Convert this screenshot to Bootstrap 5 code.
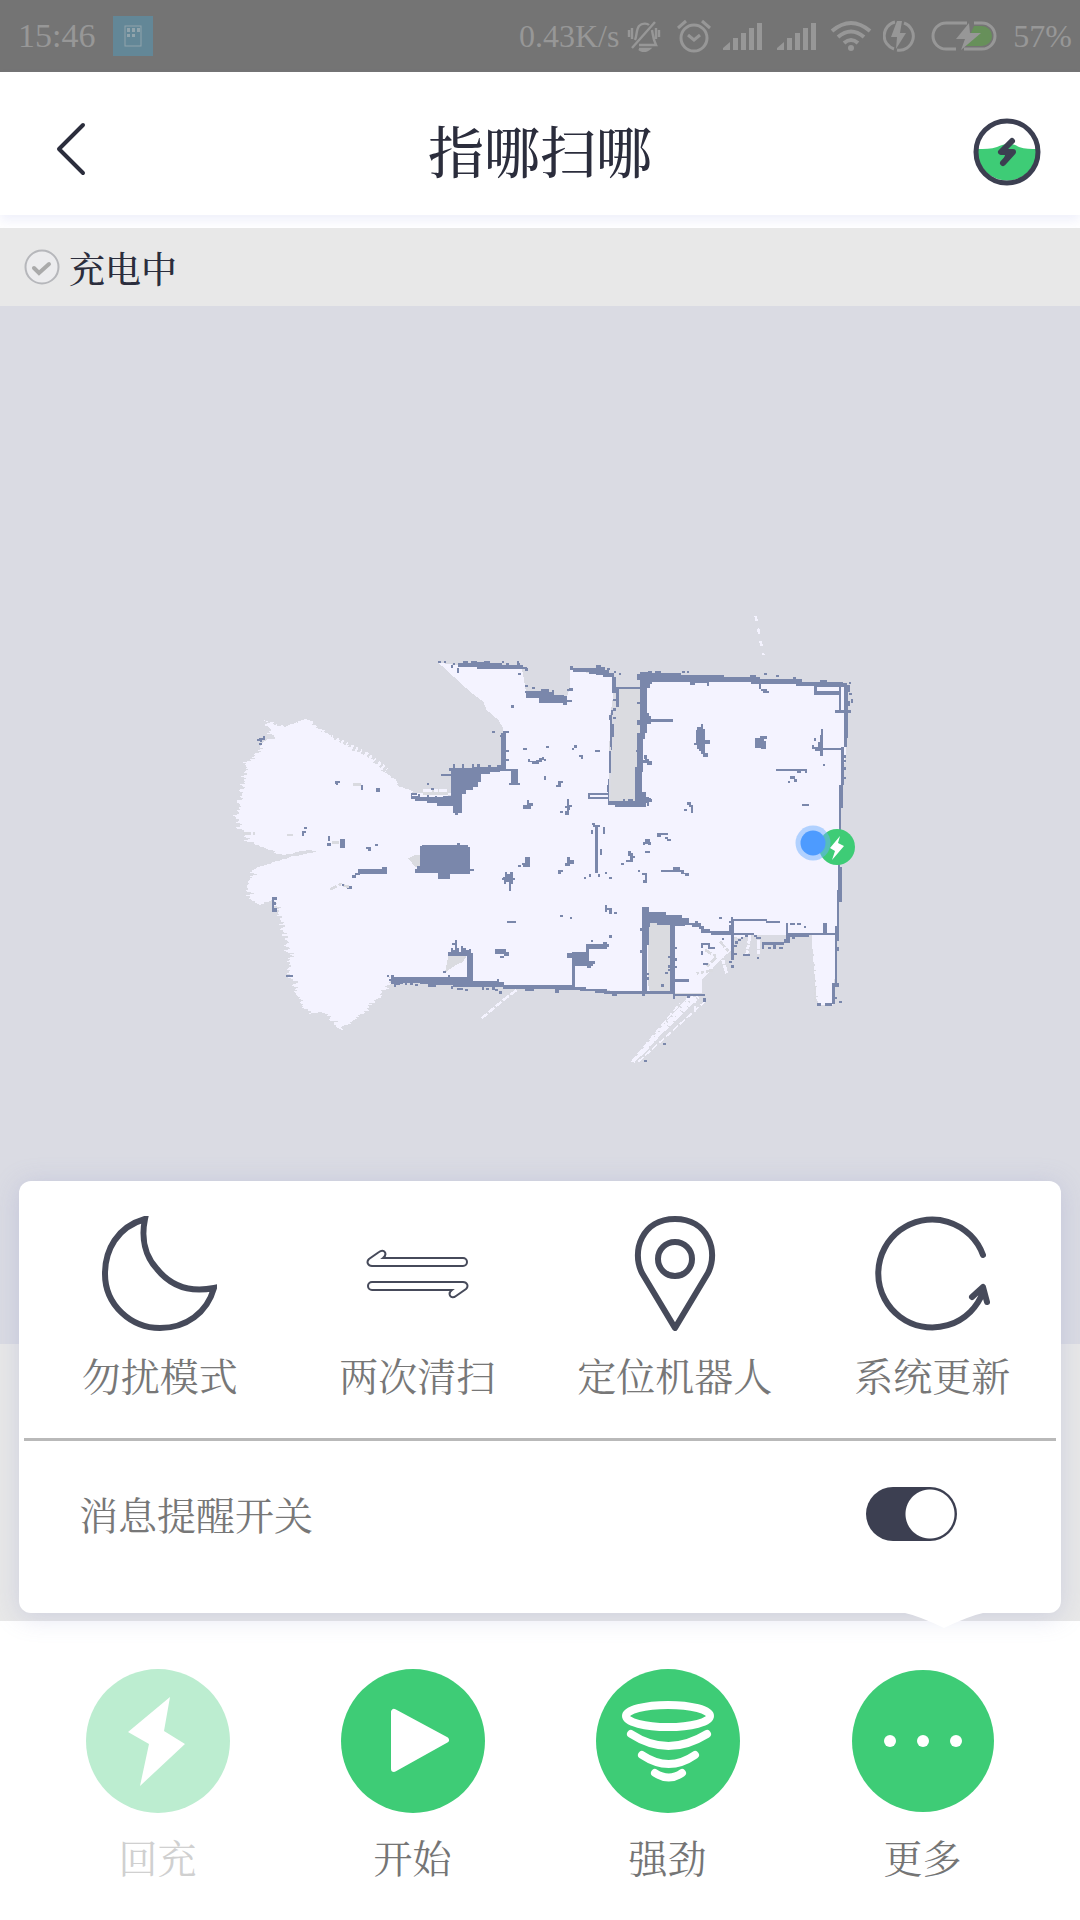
<!DOCTYPE html>
<html lang="zh-CN">
<head>
<meta charset="utf-8">
<meta name="viewport" content="width=device-width, initial-scale=1">
<title>指哪扫哪</title>
<link href="https://cdn.jsdelivr.net/npm/bootstrap@5.3.0/dist/css/bootstrap.min.css" rel="stylesheet">
<style>
  :root { --ink:#2b2d3c; }
  body { font-family:"Liberation Serif","Noto Serif CJK SC","Noto Sans CJK SC",serif; background:#fff; color:var(--ink); }
  svg { display:block; flex:none; }
  .sysbar { height:72px; background:#747474; color:#979797; font-size:32px; line-height:72px; padding:0 8px 0 18px; }
  .sysbar .clock { font-size:34px; }
  .sysbar .app { margin-left:18px; }
  .topbar { padding:38px 0 21px; box-shadow:0 6px 10px rgba(110,120,220,.1); margin-bottom:13px; }
  .topbar h1 { font-size:56px; line-height:80px; padding-top:4px; font-weight:500; margin:0; }
  .side { width:140px; }
  .side-start { padding-left:56px; }
  .side-end { padding-right:39px; }
  .bare { border:0; background:none; padding:0; color:inherit; }
  .state { background:#e8e8e8; padding-left:24px; gap:9px; font-size:36px; font-weight:500; }
  .state span { line-height:70px; padding-top:8px; }
  .stage { background:#e8e8e8; }
  .stage .plan { width:100%; height:auto; background:#dadbe3; }
  .sheet { left:19px; right:19px; bottom:8px; background:#fff; border-radius:12px; box-shadow:0 3px 26px rgba(140,145,200,.3); color:#777; font-size:39px; }
  .tools { padding:35px 0 32px 12px; }
  .tools button, .dock button { line-height:56px; }
  .tools button, .dock button { display:flex; flex-direction:column; align-items:center; gap:19px; }
  .rule { height:3px; background:#b9b9b9; margin:0 5px; }
  .notice { padding:42px 104px 68px 60px; }
  .notice label { line-height:56px; padding-top:6px; }
  .form-switch .form-check-input.toggle { width:91px; height:54px; margin:0; border:0; float:none; background-color:#b9b9b9; background-size:50px 50px; background-position:2px center; background-image:radial-gradient(circle closest-side,#fff 96%,transparent); }
  .form-switch .form-check-input.toggle:checked { background-color:#3c3f51; background-position:39px center; }
  .tip { right:78px; top:100%; margin-top:-1px; }
  .dock { padding:48px 30px 32px; color:#757575; font-size:39px; }
  .dock button:disabled { color:#d0d0d0; }
</style>
</head>
<body>
<div class="min-vh-100 d-flex flex-column">

  <div class="sysbar d-flex align-items-center">
    <span class="clock">15:46</span>
    <svg class="app" width="40" height="40" viewBox="0 0 40 40"><rect width="40" height="40" fill="#638797"/><rect x="12" y="10" width="16" height="20" fill="none" stroke="#91a4ac" stroke-width="1"/><path d="M14 12h3v4h-3zM19 12h3v4h-3zM24 12h3v4h-3zM14 18h3v3h-3zM19 18h3v3h-3z" fill="#91a4ac"/></svg>
    <span class="ms-auto me-2">0.43K/s</span>
    <svg width="34" height="32" viewBox="0 0 34 32" fill="none" stroke="#979797" stroke-width="2.400"><path d="M8 20c2-4 1-10 4-14 3-3 8-3 10-1M25 10c1 5 1 9 4 15H12M5 28 28 2M2 10v7M5 8v11M32 10v7M29 8v11"/><path d="M12 29h10q-5 4-10 0" fill="#979797"/></svg>
    <svg class="ms-3" width="34" height="34" viewBox="0 0 34 34" fill="none" stroke="#979797" stroke-width="3"><circle cx="17" cy="19" r="13"/><path d="m11 16 6 5 6-5M1 9l8-7M33 9l-8-7"/></svg>
    <svg class="ms-2" width="46" height="28" viewBox="0 0 46 28" fill="#979797"><path d="M4 28v-2l7-6v8zM14 16h5v12h-5zM22 11h5v17h-5zM30 6h5v22h-5zM38 1h5v27h-5z"/></svg>
    <svg class="ms-2" width="46" height="28" viewBox="0 0 46 28" fill="#979797"><path d="M4 28v-2l7-6v8zM14 16h5v12h-5zM22 11h5v17h-5zM30 6h5v22h-5zM38 1h5v27h-5z"/></svg>
    <svg class="ms-2" width="48" height="32" viewBox="0 0 48 32" fill="none" stroke="#979797" stroke-width="4"><path d="M5 11q19-16 38 0M11 17q13-11 26 0M17 23q7-6 14 0"/><circle cx="24" cy="28" r="3" fill="#979797" stroke="none"/></svg>
    <svg class="ms-2" width="32" height="34" viewBox="0 0 32 34"><path d="M12 3A14 14 0 0 0 11 30M21 4a14 14 0 0 1-7 27" fill="none" stroke="#979797" stroke-width="3"/><path d="M14 2 8 18h6l-1 12 10-16h-6l2-12z" fill="#979797"/></svg>
    <svg class="ms-3" width="66" height="30" viewBox="0 0 66 30"><path d="M43 5h8a10 10 0 0 1 0 20H34z" fill="#67905a"/><path d="M36 2H15a13 13 0 0 0 0 26h10M43 2h8a13 13 0 0 1 0 26H33" fill="none" stroke="#979797" stroke-width="3"/><path d="M38 2 25 18h9l-4 11 20-17H39z" fill="#979797"/></svg>
    <span class="ms-3">57%</span>
  </div>

  <header class="topbar d-flex align-items-center">
    <div class="side side-start"><button type="button" class="bare" aria-label="返回"><svg width="30" height="54" viewBox="0 0 30 54"><path d="M27 3 3 27l24 24" fill="none" stroke="#2b2d3c" stroke-width="4" stroke-linecap="round" stroke-linejoin="round"/></svg></button></div>
    <h1 class="flex-grow-1 text-center">指哪扫哪</h1>
    <div class="side side-end d-flex justify-content-end"><button type="button" class="bare" aria-label="电量"><svg width="68" height="68" viewBox="0 0 68 68"><path d="M4 31c8 0 14 0 20-2 8-4 16-4 22 0 6 2 12 2 18 2a30 30 0 1 1-60 3z" fill="#3ecc76"/><circle cx="34" cy="34" r="31" fill="none" stroke="#3c3f51" stroke-width="5"/><path d="M39 23 28 34h12L30 45" fill="none" stroke="#3c3f51" stroke-width="6" stroke-linecap="round" stroke-linejoin="round"/><path d="m38 23-9 11h10l-9 11 2-8-5-3z" fill="#3c3f51"/></svg></button></div>
  </header>

  <div class="state d-flex align-items-center">
    <svg width="36" height="36" viewBox="0 0 36 36" fill="none"><circle cx="18" cy="18" r="16.500" fill="#ececee" stroke="#b6b7bb" stroke-width="2"/><path d="m10 19 5 5 10-9" stroke="#aaa" stroke-width="4" stroke-linecap="round"/></svg>
    <span>充电中</span>
  </div>

  <main class="stage position-relative flex-grow-1">
    <svg class="plan" viewBox="0 306 1080 1038" role="img" aria-label="清扫地图" shape-rendering="crispEdges">
      <defs>
        <!-- ragged lidar edge: shifts pixels sideways only -->
        <filter id="ragged" x="-5%" y="-5%" width="110%" height="110%" color-interpolation-filters="sRGB">
          <feTurbulence type="fractalNoise" baseFrequency="0.012 0.14" numOctaves="2" seed="4"/>
          <feColorMatrix values="1 0 0 0 0  0 0 0 0 0.5  0 0 0 0 0.5  0 0 0 0 1" result="n"/>
          <feDisplacementMap in="SourceGraphic" in2="n" scale="50" xChannelSelector="R" yChannelSelector="G"/>
        </filter>
      </defs>
      <!-- cleaned floor -->
      <g transform="translate(220 640) scale(.33333)">
        <path filter="url(#ragged)" fill="#f4f3ff" d="M700 1000H515L500 1045 485 1052 470 1085 435 1110 420 1128 400 1140 370 1172 345 1150 310 1115 275 1122 250 1100 230 1050 212 1000 205 935 190 880 180 820 160 780 115 795 92 780 80 740 100 690 180 660 290 635 265 630 185 645 150 630 80 600 65 570 50 545 65 460 80 370 110 340 145 300 165 295 135 240 185 262 260 236 290 265 330 285 360 310 400 330 430 345 470 375 500 400 530 425 575 458H700Z"/>
        <path fill="#f4f3ff" d="M655 68 715 76 905 80 918 155 1035 185 1050 145V90L1180 110V165L1170 230 1165 490H1260V105L1870 130 1882 300 1865 440 1855 780 1850 880 1840 1094H1795L1785 980 1775 885H1600L1560 895 1540 890 1535 930 1500 960 1465 1000 1445 1020V1060H1360L960 1042 510 1020 480 600 545 440 600 470 690 480 700 395 850 385 850 265 835 240 800 210 790 185 750 155Z"/>
        <g fill="none" stroke="#f4f3ff">
          <path stroke-width="16" stroke-dasharray="7 9 4 12 9 7" d="M150 255 200 268 262 242 300 278 360 305 440 345 500 390"/>
          <path stroke-width="7" stroke-dasharray="22 6" d="M785 1135 850 1080 890 1050"/>
          <path stroke-width="9" stroke-dasharray="35 4 18 3" d="M1240 1265 1410 1070M1262 1245 1420 1070M1275 1225 1435 1070"/>
          <path stroke-width="5" stroke-dasharray="20 8" d="M1255 1265 1460 1080M1235 1265 1380 1090M1425 1070v45"/>
          <path stroke-width="8" stroke-dasharray="16 22" d="M1607-72 1630 45"/>
        </g>
        <!-- unreachable pockets -->
        <path fill="#dadbe0" d="M1195 145h70v345h-95l10-170zM1285 850h70v205h-65l-5-20zM600 448h85v16h-75zM685 948h55l-12 18-25 12-28 20zM565 655l20-10h15v40l-15-5z"/>
        <path fill="none" stroke="#d9dae0" stroke-width="8" stroke-dasharray="22 6 10 5" d="M70 580H105M200 585H220M330 748 360 733 390 742M335 608H362M400 434H425M1455 930 1490 950 1460 980M1500 905 1540 950M1480 990 1430 1000M1785 985v100"/>
        <path fill="none" stroke="#f4f3ff" stroke-width="9" stroke-dasharray="26 5 12 4" d="M1500 930 1520 1000M1590 885 1580 945M1615 900v45M1780 900 1795 1090M610 452h70"/>
      </g>
      <!-- west side -->
      <g transform="translate(220 640) scale(.33333)" fill="#7a87ab">
        <path d="M110 298h8v-4h12v-6h5v12h-10v6h-4v-4h-11zM118 310h7v5h-7zM345 422h14v6h-5v8h-7zM422 435h8v14h-8zM467 443h13v12h-13zM252 562h10v6h-10zM245 572h12v8h-5v8h-6v-8zM360 598h7v-2h8v27h-15zM324 588h7v15h-7zM322 610h10v8h-10zM438 620h14v12h-8v-6h-6zM466 612h7v6h-7z"/>
        <path d="M415 688h72v-6h14v20h-82v4h-12v8h-10v-8h8v-8h10zM365 732h8v6h-8zM380 744h8v-7h8v10h-16zM155 772h15v8h-7v7h6v8h-6v8h7v12h-15zM198 1006h22v5h-22zM572 458h20v6h-15v8h7v5h-12z"/>
        <path d="M501 1005h7v6h-7zM513 1005h8v7h20v22h-12v6h-8v-8h-8v-8h-5v-8h5z"/>
      </g>
      <!-- north centre -->
      <g transform="translate(400 650) scale(.33333)" fill="#7a87ab">
        <path d="M115 34h7v6h-7zM131 34h7v6h-7zM152 46h6v-6h6v6h-6v8h-6zM170 54h8v14h-8zM174 40h16v-6h14v6h8v-6h20v3h20v-3h18v6h35v6h14v-6h8v6h25v-8h8v6h10v8h10v6H230v-6h-56zM305 34h7v6h-7zM350 34h7v6h-7zM355 68h8v7h-8zM376 54h8v8h-8zM376 104h7v7h-7zM397 110h7v6h-7zM333 166h8v8h-8z"/>
        <path d="M376 124h48v-7h24v8h8v-4h6v14h30v4h8v12h16v6h-14v8h-12v-6h-72v-14h-40zM502 118h6v-5h10v10h-16zM510 48h8v6h70v-8h16v6h10v8h14v8h14v12h6v50h-12V82h-28v-6h-20v-4h-20v-6h-50v-6h-8zM622 54h7v6h-7zM642 62h7v6h-7zM656 68h7v6h-7zM642 110h80v8h-65v52h-8v-50h-7zM640 148h8v6h-8zM640 174h8v8h-8v12h-8v-14h8zM640 202h8v6h-8z"/>
        <path d="M628 196h8v26h6v40h-6v38h-4v70h-4v84h96v18h-80v-6h-20v-40h-4v-22h4v-16h4v-84h4zM565 428h60v6h-54v8h54v5h-60zM670 448h6v8h-6zM684 448h14v8h-14zM710 350h16v75h12v18h14v10h-14v18h-32zM720 68h30v45h-10v90h8v8h-8v28h-6v28h-6v100h-10V250h6V90h-4z"/>
        <path d="M304 256H299V262H304V344H290V350H272V344H264V350H240V342H232V350H222V342H216V354H192V342H186V354H164V342H158V354H146V362H152V372H122V378H152V438H130V442H112V438H104V442H88V434H82V440H60V432H54V438H32V446H46V454H80V460H110V467H158V488H166V494H174V488H186V432H198V420H220V412H234V396H242V372H270V366H300V362H334V398H328V404H360V398H354V356H318V334H326V328H318V306H326V300H318V250H326V244H308V250H304ZM276 244h8v6h-8zM80 399h8v6h-8zM94 414h8v6h-8z"/>
        <path d="M368 293h14v6h-14zM438 287h8v6h-8zM522 286h8v7h-8v7h-7v-7h7zM536 314h14v14h-6v-8h-8zM586 301h14v6h-14zM383 328h8v6h18v-4h8v-6h10v-4h6v6h6v8h-8v-5h-6v6h-8v6h-22v-6h-12zM431 379h8v12h-8zM474 392h14v8h-6v12h-14v-7h6zM370 464h10v-14h8v10h10v8h-6v8h-22zM502 448h6v16h8v6h-6v10h-2v16h-12v-12h4v-10h-6v-6h8zM480 484h8v6h-8z"/>
      </g>
      <!-- south centre -->
      <g transform="translate(400 820) scale(.33333)" fill="#7a87ab">
        <path d="M60 78h6v-4h104v-4h10v4h24v8h6v66h12v6h-12v8h-60v16h-36v-20h-70v-12h8v-8h8zM375 112h14v28h-20v-6h-4v-6h10zM355 134h7v7h-7zM310 170h4v-14h8v6h8v-6h10v18h5v6h-5v12h-6v20h-8v-26h-8v6h-6v-12h-5v-6h3zM500 112h10v8h12v12h-12v6h-14v-8h4zM474 150h14v6h-6v6h-8zM481 284h8v7h-8zM509 290h8v7h-8zM320 303h28v7h-28z"/>
        <path d="M586 20h8v140h-8zM578 8h8v7h14v7h-20v-6h-6zM572 30h8v12h-8zM608 22h7v20h-7zM600 86h7v20h-7zM551 170h7v7h-7zM566 163h7v7h-7zM593 163h8v7h-8zM614 156h7v7h-7zM628 170h7v7h-7zM664 128h7v7h-7zM684 92h8v7h6v8h8v8h-8v12h-20v-6h12v-14h-6zM713 149h7v7h-7zM726 158h14v30h-12v-7h6v-16h-8zM735 66h8v-8h6v14h-12zM735 94h14v6h-14zM614 255h8v8h14v18h-8v-12h-8v6h-6zM642 275h8v7h-8zM628 346h7v7h-7zM572 360h7v7h-7z"/>
        <path d="M144 396H152V384H158V390H164V374H156V368H164V360H170V384H176V396H182V378H188V384H198V390H206V388H214V400H220V484H290V478H298V486H312V494H515V437H517V414H502V400H515V395H558V372H608V366H620V372H628V380H622V386H566V424H586V432H578V438H572V444H560V437H524V500H558V506H620V514H750V521H650V528H636V521H612V518H586V512H540V510H476V518H466V508H402V514H376V508H310V502H284V510H276V502H252V510H246V500H160V494H108V500H84V492H60V488H40V494H30V488H10V492H0V472H200V408H144Z"/>
        <path d="M285 388h34v8h8v12h-14v6h-12v-6h10v-6h-26zM130 452h7v8h-7zM144 466h7v6h-7zM14 488h8v6h-8zM45 492h8v6h-8zM152 498h8v8h-8zM172 504h18v6h-18zM196 508h8v6h-8zM258 503h8v8h-8zM285 506h8v8h-8zM298 514h8v7h-8zM720 324h7v7h-7zM720 390h7v10h-7zM740 460h8v6h-8z"/>
      </g>
      <!-- south east -->
      <g transform="translate(630 890) scale(.33333)" fill="#7a87ab">
        <path d="M37 50H57V66H109V76H155V84H178V100H196V94H204V100H212V108H222V116H240V122H298V104H302V98H298V92H302V80H308V86H412V93H450V100H408V93H312V128H372V134H312V210H304V134H242V128H214V118H206V110H186V106H164V108H134V312H226V318H136V326H128V311H45V318H37V311H0V304H37ZM60 100V112H56V165H50V304H121V106H80V100Z" fill-rule="evenodd"/>
        <path d="M134 170h8v7h-8zM134 205h8v7h-8zM134 228h8v7h-8zM134 268h42v7h-42zM114 198h10v7h-10zM114 226h10v7h-10zM106 246h8v-8h8v6h-8v8h-8zM93 283h8v7h-8zM50 249h8v7h-8zM50 262h8v7h-8zM30 115h7v7h-7zM30 180h8v10h-8zM214 158h26v14h16v6h-22v-14h-14v10h-6zM212 184h6v12h-6zM218 220h16v6h-16zM220 325h8v12h-8zM170 317h10v7h-10zM268 80h7v7h-7zM276 143h7v7h-7zM340 192h20v6h-20zM380 200h8v6h-8zM304 226h8v7h-8zM298 212h8v6h-8zM312 166h8v6h-8zM312 190h8v6h-8zM316 154h8v7h-8zM324 148h8v-7h7v7h-7v6h-8zM346 134h8v7h-8zM372 134h8v6h14v8h-16v-8h-6zM100 460h8v6h-8zM43 510h8v6h-8z"/>
        <path d="M396 156H462V148H467V100H473V128H580V100H592V128H614V108H622V0H634V36H628V154H622V172H628V184H622V280H628V290H616V320H622V328H614V342H606V278H614V134H538V140H494V148H486V142H480V160H462V164H402V178H396ZM414 172h10v6h-10zM430 162h8v14h-8zM448 172h10v6h-10zM480 100h14v6h-14zM502 100h12v6h-12zM522 107h7v7h-7zM560 340h12v7h-12zM584 340h22v7h-22zM627 332h8v7h-8z"/>
      </g>
      <!-- north east -->
      <g transform="translate(630 660) scale(.33333)" fill="#7a87ab">
        <path d="M22 42H30V36H54V32H66V38H74V32H92V38H154V44H282V52H360V46H378V52H390V58H488V52H498V58H516V66H570V60H590V66H638V70H652V76H660V96H654V122H660V138H654V234H650V262H642V374H640V444H634V510H628V374H634V262H642V158H614V151H626V106H552V78H498V72H362V66H238V78H230V68H196V74H180V66H65V72H50V84H44V160H56V168H64V178H128V185H64V192H50V202H44V208H50V218H42V238H36V410H58V418H66V426H58V438H50V430H44V440H16V320H22V220H30V196H22V188H30V60H22ZM562 80V94H626V80ZM633 80V151H642V80Z" fill-rule="evenodd"/>
        <path d="M157 34h7v6h-7zM170 32h7v6h-7zM402 40h8v6h-8zM438 46h8v6h-8zM656 66h7v6h-7zM658 98h8v8h-8zM662 118h6v12h-6zM655 150h8v8h-8zM388 70h6v16h16v8h6v6h-16v-8h-8v-4h-6zM200 200h12v-7h6v14h8v34h14v12h-14v25h8v12h-14v-8h-6v-8h-6v-8h-8v-12h-8v-6h6zM376 234h14v-6h20v8h-8v8h6v24h-14v-4h-18zM572 208h7v56h58v6h-58v18h-8v-14h-16v-6h-10v-12h6v6h12v-16h8zM551 234h6v8h-6zM578 312h8v7h-8zM438 326h92v12h-6v-4h-12v4h-10v-6h-64zM480 348h14v10h8v8h-10v-8h-12zM473 362h8v6h-8zM170 426h14v8h6v24h-8v-16h-6v-6h-6zM163 446h7v7h-7zM515 433h22v6h-22zM80 518h34v6H94v6H80zM42 284h8v12h8v6h8v14H50v-8H36v-8h8z"/>
        <path d="M640 285h8v8h-8zM642 300h6v6h-6zM640 322h8v8h-8zM640 350h8v8h-8zM18 270h8v6h-8zM22 125h8v8h-8zM22 180h8v8h-8z"/>
      </g>
      <g transform="translate(540 600) scale(.33333)" fill="#7a87ab">
        <path d="M895 785h6v105h-6zM897 800h8v106h-8zM363 809h36v-7h20v8h12v8h16v10h-12v-6h-12v-6h-60zM308 726h8v-8h8v8h8v10h-8v-8h-8v6h-8zM314 753h14v6h-14zM376 710h8v8h8v6h-10v-8h-6z"/>
      </g>
      <g shape-rendering="auto">
        <circle cx="837" cy="847" r="18" fill="#3ecc76"/>
        <path d="M840 836 830 848l5 3-3 9 12-14-6-3z" fill="#fff"/>
        <circle cx="813" cy="843" r="17.500" fill="#6eb0ff" fill-opacity=".5"/>
        <circle cx="813" cy="843" r="12.500" fill="#4d9bff"/>
      </g>
    </svg>

    <section class="sheet position-absolute" aria-label="更多">
      <div class="tools row row-cols-4 g-0">
        <button type="button" class="bare col"><svg width="115" height="115" viewBox="0 0 115 115" fill="none" stroke="#464a5a" stroke-width="6"><path d="M43 3C15 11 3 34 3 58c0 31 26 54 55 54 26 0 47-15 54-40-25 5-44-3-57-19C43 40 39 22 43 3Z"/></svg><span>勿扰模式</span></button>
        <button type="button" class="bare col"><svg width="115" height="115" viewBox="0 0 115 115" fill="none" stroke="#464a5a" stroke-width="2"><path d="M12 50h91a4 4 0 0 0 0-8H23c5-4 1-10-4-6L9 43c-3 3-1 7 3 7ZM103 66H12a4 4 0 0 0 0 8h80c-5 4-1 10 4 6l10-7c3-3 1-7-3-7Z"/></svg><span>两次清扫</span></button>
        <button type="button" class="bare col"><svg width="115" height="115" viewBox="0 0 115 115" fill="none" stroke="#464a5a" stroke-width="6"><path d="M58 112 25 57C14 35 25 3 58 3s44 32 33 54Z" stroke-linejoin="round"/><circle cx="58" cy="43" r="17"/></svg><span>定位机器人</span></button>
        <button type="button" class="bare col"><svg width="115" height="115" viewBox="0 0 115 115" fill="none" stroke="#464a5a" stroke-width="6"><path d="M108 39A54 54 0 1 0 108 76M97 81l11-10 4 15" stroke-linecap="round" stroke-linejoin="round"/></svg><span>系统更新</span></button>
      </div>
      <div class="rule"></div>
      <div class="notice form-switch d-flex align-items-center justify-content-between">
        <label for="notify">消息提醒开关</label>
        <input class="form-check-input toggle" type="checkbox" role="switch" id="notify" checked>
      </div>
      <svg class="tip position-absolute" width="78" height="16" viewBox="0 0 78 16"><path d="M0 0h78v1Q64 4 39 16 14 4 0 1Z" fill="#fff"/></svg>
    </section>
  </main>

  <footer class="dock row row-cols-4 g-0">
    <button type="button" class="bare col" disabled><svg width="144" height="144" viewBox="0 0 144 144"><circle cx="72" cy="72" r="72" fill="#bcedd0"/><path d="M84 28 42 63l21 12-9 42 45-42-21-13z" fill="#fff"/></svg><span>回充</span></button>
    <button type="button" class="bare col"><svg width="144" height="144" viewBox="0 0 144 144"><circle cx="72" cy="72" r="72" fill="#3ecc76"/><path d="M53 43v57l52-29z" fill="#fff" stroke="#fff" stroke-width="6" stroke-linejoin="round"/></svg><span>开始</span></button>
    <button type="button" class="bare col"><svg width="144" height="144" viewBox="0 0 144 144"><circle cx="72" cy="72" r="72" fill="#3ecc76"/><g fill="none" stroke="#fff" stroke-width="8" stroke-linecap="round"><ellipse cx="72" cy="47" rx="42" ry="11"/><path d="M35 65q37 24 76 0M46 86q27 18 53 0M59 104q14 9 27 0"/></g></svg><span>强劲</span></button>
    <button type="button" class="bare col"><svg width="144" height="144" viewBox="0 0 144 144"><circle cx="72" cy="72" r="71" fill="#3ecc76"/><g fill="#fff"><circle cx="39" cy="72" r="6"/><circle cx="72" cy="72" r="6"/><circle cx="105" cy="72" r="6"/></g></svg><span>更多</span></button>
  </footer>
</div>
<script src="https://cdn.jsdelivr.net/npm/bootstrap@5.3.0/dist/js/bootstrap.bundle.min.js"></script>
</body>
</html>
